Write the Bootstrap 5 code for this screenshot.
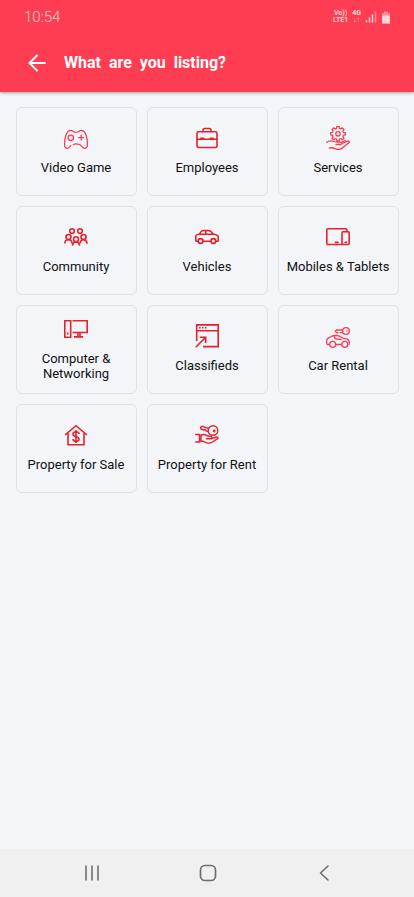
<!DOCTYPE html>
<html lang="en">
<head>
<meta charset="utf-8">
<meta name="viewport" content="width=device-width, initial-scale=1">
<title>What are you listing?</title>
<link href="https://cdn.jsdelivr.net/npm/bootstrap@5.3.0/dist/css/bootstrap.min.css" rel="stylesheet">
<style>
  body { font-family: Roboto, "Liberation Sans", sans-serif; background: #f3f5f9; color: #111; }
  svg { display: block; fill: none; stroke: currentColor; stroke-linecap: round; stroke-linejoin: round; }
  .app-header { background: #ff3d52; color: #fff; box-shadow: 0 1px 3px rgba(0, 0, 0, .35); }
  .status-line { height: 32px; padding: 2px 23px 0 24px; color: #ffd3d7; font-size: 15px; font-weight: 300; }
  .net-label { font-size: 7px; line-height: 7px; font-weight: 700; text-align: center; }
  .title-line { height: 60px; padding: 1px 24px 0; gap: 14px; }
  .title-text { font-size: 16px; line-height: 19px; font-weight: 700; white-space: pre; }
  .back-btn { width: 26px; height: 32px; color: #fff; }
  .tile-area { padding: 15px 15px 15px 16px; }
  .tile-grid { display: grid; grid-template-columns: repeat(3, 1fr); gap: 10px; }
  .tile { height: 89px; border: 1px solid #dfe1e6; border-radius: 6px; background: transparent; color: #111; font-size: 13px; line-height: 15px; gap: 10px; padding: 0 5px 2px 4px; }
  .tile svg { width: 24px; height: 24px; color: #e8202c; stroke-width: 1.6; flex: none; }
  .tile svg.rosy { color: #fb3b50; stroke-width: 1.3; }
  .tile svg.fine { stroke-width: 1.4; }
  .tile svg.squared, .bars { stroke-linecap: butt; stroke-linejoin: miter; }
  .system-bar { height: 48px; padding: 0 32px 0 34px; background: #f0f0f0; }
  .system-bar .btn { color: #6e6e6e; }
</style>
<script src="https://cdn.jsdelivr.net/npm/bootstrap@5.3.0/dist/js/bootstrap.bundle.min.js" defer></script>
</head>
<body class="d-flex flex-column min-vh-100">

<header class="app-header">
  <div class="status-line d-flex align-items-center justify-content-between">
    <span>10:54</span>
    <div class="d-flex align-items-center gap-1">
      <div class="net-label">Vo))<br>LTE1</div>
      <div class="net-label">4G<br>↓↑</div>
      <svg class="bars" width="12" height="12" viewBox="0 0 12 12" stroke-width="1.500" aria-hidden="true"><path d="M1.500 9v2.500M4.500 6.500v5M7.500 3.500v8"/><path d="M10.500 .5v11" opacity=".5"/></svg>
      <svg width="10" height="13" viewBox="0 0 10 13" aria-hidden="true"><path d="M3 .5h4v1.500h2v10.500h-8V2h2z" fill="currentColor" stroke="none" opacity=".5"/><path d="M1 4.500h8v8h-8z" fill="currentColor" stroke="none"/></svg>
    </div>
  </div>
  <div class="title-line d-flex align-items-center">
    <button type="button" class="btn p-0 border-0 back-btn d-flex align-items-center justify-content-center" aria-label="Back">
      <svg width="18" height="18" viewBox="0 0 18 18" stroke-width="2"><path d="M17 9H1.500M9 1.500L1.500 9L9 16.500"/></svg>
    </button>
    <h1 class="title-text mb-0">What  are  you  listing?</h1>
  </div>
</header>

<main class="tile-area flex-grow-1">
  <div class="tile-grid">

    <button type="button" class="tile d-flex flex-column align-items-center justify-content-center">
      <svg class="rosy" viewBox="0 0 24 24" aria-hidden="true"><path d="M9.300 18.500Q12 17.300 15.600 18.500C17 19 18.500 22.500 20.800 22.400C22.500 22.300 23.400 20.500 23.400 18.500C23.400 14 22.200 8.500 20.500 6.200C19.400 4.200 16.800 4 15.200 5.300C14.300 6 13.200 6.300 12 6.300S9.700 6 8.800 5.300C7.200 4 4.600 4.200 3.500 6.200C1.800 8.500.6 14 .6 18.500C.6 20.500 1.500 22.300 3.200 22.400C4.700 22.500 5.600 20.800 6.800 19.600"/><circle cx="6.800" cy="11.800" r="2.700"/><path d="M14.700 11.600h5M17.200 9.100v5"/></svg>
      <span>Video Game</span>
    </button>

    <button type="button" class="tile d-flex flex-column align-items-center justify-content-center">
      <svg viewBox="0 0 24 24" aria-hidden="true"><rect x="2" y="5.700" width="20" height="15.800" rx="1.500"/><path d="M8 5.500V4Q8 2.500 9.500 2.500h5Q16 2.500 16 4v1.500M2 13.300h20"/><path d="M6 12.500h2.500M15.500 12.500H18" stroke-width="2.200"/></svg>
      <span>Employees</span>
    </button>

    <button type="button" class="tile d-flex flex-column align-items-center justify-content-center">
      <svg class="rosy" viewBox="0 0 24 24" aria-hidden="true"><path d="M10.900.6h2.200l.4 1.800 1.300.5 1.600-1 1.500 1.500-1 1.600.6 1.300 1.800.4v2.200l-1.800.4-.6 1.300 1 1.600-1.500 1.500-1.600-1-1.300.5-.4 1.800h-2.200l-.4-1.800-1.300-.5-1.600 1-1.500-1.500 1-1.600-.6-1.300-1.800-.4V6.700l1.800-.4.6-1.300-1-1.600 1.500-1.500 1.600 1 1.300-.5z"/><circle cx="12" cy="7.800" r="2.200"/><path d="M.5 16.300Q4.500 13.800 8 15.500Q9.500 16.300 12 16.200h2.500Q16 16.200 16 17.300T14.500 18.500H10M16 17.500L21.800 15.200Q23.300 15 23.500 16.200L17 21.500Q15 23.400 12.500 23.400Q9.500 23.400 8.500 22.600Q6.500 21.300 3.500 22M16 16L19.500 14.500"/></svg>
      <span>Services</span>
    </button>

    <button type="button" class="tile d-flex flex-column align-items-center justify-content-center">
      <svg viewBox="0 0 24 24" aria-hidden="true"><circle cx="8" cy="6" r="2.300"/><circle cx="16" cy="6" r="2.300"/><circle cx="4.500" cy="12" r="2.500"/><circle cx="19.500" cy="12" r="2.500"/><circle cx="12" cy="14.200" r="2.500"/><path d="M.9 18Q1 14.800 4.500 14.800T7.800 17.800M16.200 17.800Q16.500 14.800 19.500 14.800T23.100 18M8.500 20Q9 17 12 17T15.500 20"/></svg>
      <span>Community</span>
    </button>

    <button type="button" class="tile d-flex flex-column align-items-center justify-content-center">
      <svg viewBox="0 0 24 24" aria-hidden="true"><path d="M3 16.300H1.700Q.8 16.300.8 15.500V11.500Q.8 9.800 2.500 9.500L4.300 9.200L6.300 6.400Q7 5.500 8.300 5.500h5.200Q14.800 5.500 15.700 6.300L18.500 9.200Q22 9.400 23 11Q23.400 12 23.200 15.500Q23.200 16.300 22.400 16.300H21M8.200 16.300h7.500M4.300 9.300h14.200M10.700 5.500v3.800"/><circle cx="5.600" cy="16" r="2.400"/><circle cx="18.300" cy="16" r="2.400"/></svg>
      <span>Vehicles</span>
    </button>

    <button type="button" class="tile d-flex flex-column align-items-center justify-content-center">
      <svg viewBox="0 0 24 24" aria-hidden="true"><path d="M16 19.500H1.600Q.8 19.500.8 18.500V4.700Q.8 3.700 1.600 3.700H19.800Q20.800 3.700 20.800 4.700V6.500"/><rect x="16" y="6.700" width="7.200" height="12.800" rx="1"/><path d="M9.500 17.400h2.500M19.200 17.400h1.200"/></svg>
      <span>Mobiles &amp; Tablets</span>
    </button>

    <button type="button" class="tile d-flex flex-column align-items-center justify-content-center">
      <svg class="squared" viewBox="0 0 24 24" aria-hidden="true"><path d="M.8 3.700h5.900v16.600H.8zM8.500 3.700h14.700v11.800H8.500M14 15.500v3.800M16 15.500v3.800M10 19.900h9"/><path d="M3.700 15.500v2"/></svg>
      <span>Computer &amp; Networking</span>
    </button>

    <button type="button" class="tile d-flex flex-column align-items-center justify-content-center">
      <svg class="squared" viewBox="0 0 24 24" aria-hidden="true"><path d="M1.700 17V.9h21.500v21.700H8M1.700 6.700h21.500"/><path d="M4 3.800h1.600M6.900 3.800h1.600M9.800 3.800h1.600"/><path d="M.7 23.300L10.700 13.300M5 13.300h5.700V19"/></svg>
      <span>Classifieds</span>
    </button>

    <button type="button" class="tile d-flex flex-column align-items-center justify-content-center">
      <svg class="rosy" viewBox="0 0 24 24" aria-hidden="true"><circle cx="20" cy="7" r="3.300"/><path d="M20.800 7h.2M16.500 6H10.500L9.300 7.300L10.500 8.700H12M14 8.700H16.500M3.500 20.500H1.800Q.7 20.500.7 19V16.500Q.7 15 2 14.400L4.800 12.700Q6.800 11.500 10 11.500Q13 11.500 15 13L17.500 14.300Q21.500 14.500 22.800 16.300Q23.500 17.500 23.300 19.500Q23.200 20.500 22 20.500M10 20.500h5.500M8 12Q8.800 15 11 15.200L15 15.500"/><circle cx="6.700" cy="20.300" r="3"/><circle cx="18.800" cy="20.300" r="3"/></svg>
      <span>Car Rental</span>
    </button>

    <button type="button" class="tile d-flex flex-column align-items-center justify-content-center">
      <svg class="squared" viewBox="0 0 24 24" aria-hidden="true"><path d="M1 12L12 2.700L23 12M4 10V21.800H20V10"/><path d="M15 11Q15 8.800 12 8.800T9 11.200Q9 13 12 13.700T15 16.300Q15 18.300 12 18.300T9 16M12 7v13"/></svg>
      <span>Property for Sale</span>
    </button>

    <button type="button" class="tile d-flex flex-column align-items-center justify-content-center">
      <svg class="fine" viewBox="0 0 24 24" aria-hidden="true"><circle cx="18" cy="7.500" r="4.800"/><circle cx="19.200" cy="8" r=".7"/><path d="M13.500 5.500L7 3.200L5.500 4.300L6 6L9 7.200L10 6.500L11 7.800L13.300 8.500M.7 11.500H4.500V19H.7M6.500 12Q9 10.800 11.500 12.500L16.500 13.700Q17.500 14.500 16.500 15.700H11.500M17.500 15.300L21.500 14Q23.300 14 23 15.300L17.500 19Q14.500 20.800 11.500 19.800L8 18.200H6.500M6 12V18.500"/></svg>
      <span>Property for Rent</span>
    </button>

  </div>
</main>

<footer class="system-bar d-flex align-items-center">
  <button type="button" class="btn border-0 p-0 flex-fill d-flex justify-content-center" aria-label="Recent apps">
    <svg width="18" height="18" viewBox="0 0 18 18" stroke-width="1.600"><path d="M3 2v14M9 2v14M15 2v14"/></svg>
  </button>
  <button type="button" class="btn border-0 p-0 flex-fill d-flex justify-content-center" aria-label="Home">
    <svg width="18" height="18" viewBox="0 0 18 18" stroke-width="1.700"><rect x="1.500" y="1.500" width="15" height="15" rx="4.500"/></svg>
  </button>
  <button type="button" class="btn border-0 p-0 flex-fill d-flex justify-content-center" aria-label="Go back">
    <svg width="18" height="18" viewBox="0 0 18 18" stroke-width="1.600"><path d="M13 2L5.500 9L13 16"/></svg>
  </button>
</footer>

</body>
</html>
